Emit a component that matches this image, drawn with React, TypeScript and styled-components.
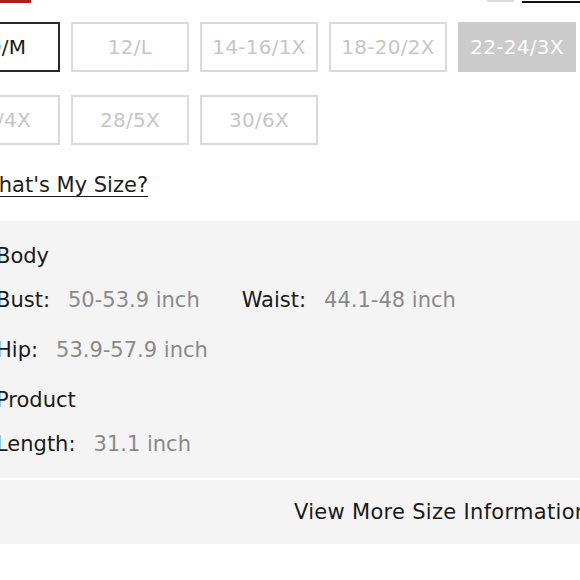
import { createGlobalStyle } from "styled-components"
import styled from "styled-components"

const GlobalStyle = createGlobalStyle`
  html, body {
    margin: 0;
    padding: 0;
    background: #ffffff;
    overflow: hidden;
  }
  body {
    font-family: "DejaVu Sans", "Noto Sans", sans-serif;
    color: #222222;
  }
`

const Viewport = styled.div`
  width: 580px;
  height: 580px;
  overflow: hidden;
`

const Page = styled.div`
  width: 700px;
  margin-left: -58px;
  display: flex;
  flex-direction: column;
`

const TopBar = styled.div`
  height: 30px;
  margin-top: -27px;
  display: flex;
  align-items: flex-end;
  justify-content: space-between;
`

const Badge = styled.div`
  width: 31px;
  height: 30px;
  margin-left: 58px;
  background: #a8211b;
`

const GuideLink = styled.div`
  display: flex;
  align-items: flex-end;
  gap: 8px;
  margin-right: 58px;
`

const GuideIcon = styled.div`
  width: 27px;
  height: 2px;
  margin-bottom: 1px;
  background: #dcdcdc;
`

const GuideText = styled.div`
  width: 62px;
  height: 30px;
  border-bottom: 2px solid #111111;
  box-sizing: border-box;
`

const SizeGrid = styled.div`
  display: flex;
  flex-wrap: wrap;
  gap: 23px 11px;
  width: 634px;
  margin-top: 19px;
`

const SizeButton = styled.button<{ $state: "selected" | "idle" | "soldout" }>`
  width: 118px;
  height: 50px;
  box-sizing: border-box;
  padding: 0;
  font-family: inherit;
  font-size: 20px;
  letter-spacing: 0.3px;
  background: ${p => (p.$state === "soldout" ? "#cbcbcb" : "#ffffff")};
  color: ${p =>
    p.$state === "selected" ? "#1a1a1a" : p.$state === "soldout" ? "#ffffff" : "#c6c6c6"};
  border: ${p =>
    p.$state === "selected"
      ? "2px solid #2a2a2a"
      : p.$state === "soldout"
      ? "2px solid #cbcbcb"
      : "2px solid #dadada"};
  display: flex;
  align-items: center;
  justify-content: center;
`

const SizeLink = styled.a`
  margin-top: 27px;
  margin-left: 36px;
  align-self: flex-start;
  font-size: 21px;
  line-height: 26px;
  color: #1e1e1e;
  text-decoration: underline;
  text-underline-offset: 4px;
  text-decoration-thickness: 1px;
`

const InfoPanel = styled.div`
  margin-top: 23px;
  margin-left: -40px;
  width: 1000px;
  background: #f4f4f4;
  display: flex;
  flex-direction: column;
`

const InfoBody = styled.div`
  padding: 23px 0 22px 94px;
  display: flex;
  flex-direction: column;
`

const SectionTitle = styled.div<{ $spaced?: boolean }>`
  font-size: 21px;
  line-height: 24px;
  color: #1a1a1a;
  margin-top: ${p => (p.$spaced ? "26px" : "0")};
  margin-bottom: 20px;
`

const AttrRow = styled.div<{ $spaced?: boolean }>`
  display: flex;
  gap: 42px;
  margin-top: ${p => (p.$spaced ? "26px" : "0")};
`

const Attr = styled.div`
  display: flex;
  gap: 18px;
  font-size: 21px;
  line-height: 24px;
`

const AttrLabel = styled.span`
  color: #1a1a1a;
`

const AttrValue = styled.span`
  color: #8a8a8a;
`

const Footer = styled.div`
  border-top: 2px solid #ffffff;
  height: 64px;
  display: flex;
  align-items: center;
  padding-left: 392px;
  font-size: 21px;
  letter-spacing: 0.3px;
  color: #1a1a1a;
  white-space: nowrap;
`

const sizes: { label: string; state: "selected" | "idle" | "soldout" }[] = [
  { label: "10/M", state: "selected" },
  { label: "12/L", state: "idle" },
  { label: "14-16/1X", state: "idle" },
  { label: "18-20/2X", state: "idle" },
  { label: "22-24/3X", state: "soldout" },
  { label: "26/4X", state: "idle" },
  { label: "28/5X", state: "idle" },
  { label: "30/6X", state: "idle" },
]

export default function App() {
  return (
    <Viewport>
      <GlobalStyle />
      <Page>
        <TopBar>
          <Badge />
          <GuideLink>
            <GuideIcon />
            <GuideText />
          </GuideLink>
        </TopBar>
        <SizeGrid>
          {sizes.map(s => (
            <SizeButton key={s.label} $state={s.state}>
              {s.label}
            </SizeButton>
          ))}
        </SizeGrid>
        <SizeLink>What's My Size?</SizeLink>
        <InfoPanel>
          <InfoBody>
            <SectionTitle>Body</SectionTitle>
            <AttrRow>
              <Attr>
                <AttrLabel>Bust:</AttrLabel>
                <AttrValue>50-53.9 inch</AttrValue>
              </Attr>
              <Attr>
                <AttrLabel>Waist:</AttrLabel>
                <AttrValue>44.1-48 inch</AttrValue>
              </Attr>
            </AttrRow>
            <AttrRow $spaced>
              <Attr>
                <AttrLabel>Hip:</AttrLabel>
                <AttrValue>53.9-57.9 inch</AttrValue>
              </Attr>
            </AttrRow>
            <SectionTitle $spaced>Product</SectionTitle>
            <AttrRow>
              <Attr>
                <AttrLabel>Length:</AttrLabel>
                <AttrValue>31.1 inch</AttrValue>
              </Attr>
            </AttrRow>
          </InfoBody>
          <Footer>View More Size Information</Footer>
        </InfoPanel>
      </Page>
    </Viewport>
  )
}
